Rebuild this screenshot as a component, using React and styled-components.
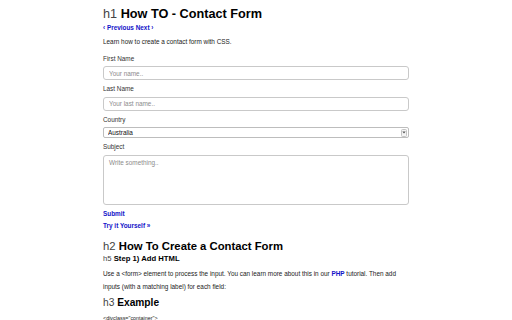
import React from 'react'
import styled, { createGlobalStyle } from 'styled-components'

const GlobalStyle = createGlobalStyle`
	html, body {
		margin: 0;
		padding: 0;
		background: #ffffff;
	}
	body {
		font-family: 'Liberation Sans', Arial, Helvetica, sans-serif;
		color: #222;
	}
	* {
		box-sizing: border-box;
	}
`

const Page = styled.main`
	width: 306px;
	margin: 0 auto;
	padding-top: 6px;
`

const Heading = styled.h1`
	margin: ${({ $mt }) => $mt || 0}px 0 0;
	font-size: ${({ $size }) => $size}px;
	line-height: ${({ $lh }) => $lh}px;
	font-weight: 700;
	color: #000;
	white-space: nowrap;
`

const Tag = styled.span`
	font-weight: 400;
	color: #444;
`

const Line = styled.div`
	margin-top: ${({ $mt }) => $mt || 0}px;
	font-size: 6.4px;
	line-height: 8px;
	color: #222;
	white-space: nowrap;
`

const BlueLink = styled.a`
	color: #1212c8;
	font-weight: 700;
	text-decoration: none;
`

const Paragraph = styled.p`
	margin: ${({ $mt }) => $mt || 0}px 0 0;
	font-size: 6.4px;
	line-height: 13.3px;
	color: #222;
`

const Form = styled.form`
	margin: 0;
	display: flex;
	flex-direction: column;
`

const Label = styled.label`
	display: block;
	margin-top: ${({ $mt }) => $mt}px;
	font-size: 6.4px;
	line-height: 8px;
	color: #333;
`

const fieldBase = `
	display: block;
	width: 100%;
	margin: 0;
	border: 1px solid #c9c9c9;
	border-radius: 3px;
	background: #fff;
	font-family: 'Liberation Sans', Arial, sans-serif;
	font-size: 6.4px;
	color: #222;
	outline: none;
	&::placeholder {
		color: #8c8c8c;
	}
`

const TextInput = styled.input`
	${fieldBase}
	margin-top: 3.5px;
	height: 14px;
	padding: 0 5px;
`

const TextArea = styled.textarea`
	${fieldBase}
	margin-top: 3.5px;
	height: 50px;
	padding: 3px 5px;
	resize: none;
	line-height: 8px;
`

const SelectBox = styled.div`
	margin-top: 3.5px;
	height: 11px;
	display: flex;
	align-items: center;
	border: 1px solid #bdbdbd;
	border-radius: 2px;
	background: #fff;
	padding-right: 1px;
`

const Select = styled.select`
	flex: 1;
	height: 100%;
	border: none;
	background: transparent;
	appearance: none;
	padding: 0 4px;
	font-family: 'Liberation Sans', Arial, sans-serif;
	font-size: 6.4px;
	color: #111;
	outline: none;
`

const ArrowBox = styled.span`
	width: 6px;
	height: 8px;
	display: flex;
	align-items: center;
	justify-content: center;
	border: 1px solid #c4c4c4;
	border-radius: 1.5px;
	background: #f4f4f4;
`

const Code = styled.div`
	margin-top: 5px;
	font-size: 5.4px;
	line-height: 8px;
	color: #222;
	white-space: nowrap;
`

export default function App() {
	return (
		<>
			<GlobalStyle />
			<Page>
				<Heading $size={12.7} $lh={16}>
					<Tag>h1</Tag> How TO - Contact Form
				</Heading>
				<Line $mt={1.5}>
					<BlueLink href='#'>&#x2039; Previous</BlueLink> <BlueLink href='#'>Next &#x203A;</BlueLink>
				</Line>
				<Line $mt={6}>Learn how to create a contact form with CSS.</Line>

				<Form onSubmit={(e) => e.preventDefault()}>
					<Label $mt={9} htmlFor='fname'>First Name</Label>
					<TextInput id='fname' placeholder='Your name..' />

					<Label $mt={5} htmlFor='lname'>Last Name</Label>
					<TextInput id='lname' placeholder='Your last name..' />

					<Label $mt={5} htmlFor='country'>Country</Label>
					<SelectBox>
						<Select id='country' defaultValue='australia'>
							<option value='australia'>Australia</option>
							<option value='canada'>Canada</option>
							<option value='usa'>USA</option>
						</Select>
						<ArrowBox>
							<svg width='4' height='3' viewBox='0 0 4 3'>
								<path d='M0.3 0.5 L2 2.5 L3.7 0.5 Z' fill='#555' />
							</svg>
						</ArrowBox>
					</SelectBox>

					<Label $mt={5} htmlFor='subject'>Subject</Label>
					<TextArea id='subject' placeholder='Write something..' />
				</Form>

				<Line $mt={5.3}>
					<BlueLink href='#'>Submit</BlueLink>
				</Line>
				<Line $mt={4.4}>
					<BlueLink href='#'>Try it Yourself &raquo;</BlueLink>
				</Line>

				<Heading as='h2' $size={11.3} $lh={14} $mt={8.6}>
					<Tag>h2</Tag> How To Create a Contact Form
				</Heading>
				<Heading as='h5' $size={7.7} $lh={10} $mt={1.7}>
					<Tag>h5</Tag> Step 1) Add HTML
				</Heading>
				<Paragraph $mt={2.7}>
					Use a &lt;form&gt; element to process the input. You can learn more about this in our{' '}
					<BlueLink href='#'>PHP</BlueLink> tutorial. Then add inputs (with a matching label) for each field:
				</Paragraph>

				<Heading as='h3' $size={10.2} $lh={12} $mt={3.7}>
					<Tag>h3</Tag> Example
				</Heading>
				<Code>&lt;divclass="container"&gt;</Code>
			</Page>
		</>
	)
}
